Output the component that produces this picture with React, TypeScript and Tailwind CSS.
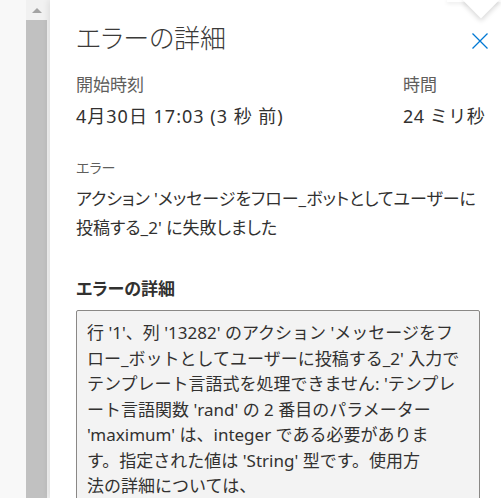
const font = "font-['Noto_Sans','Noto_Sans_CJK_JP',sans-serif]";
const palt = "[font-feature-settings:'palt']";

const detailLines = [
  "行 '1'、列 '13282' のアクション 'メッセージをフ",
  "ロー_ボットとしてユーザーに投稿する_2' 入力で",
  "テンプレート言語式を処理できません: 'テンプレ",
  "ート言語関数 'rand' の 2 番目のパラメーター",
  "'maximum' は、integer である必要がありま",
  "す。指定された値は 'String' 型です。使用方",
  "法の詳細については、",
];

const App = () => {
  return (
    <div className={`relative flex h-[498px] w-[501px] overflow-hidden bg-[#f8f8f8] ${font}`}>
      {/* left gutter */}
      <div className="w-[26px] shrink-0" />

      {/* scrollbar */}
      <div className="flex w-[21px] shrink-0 flex-col bg-[#f1f1f1]">
        <div className="flex h-[20px] items-center justify-center">
          <div className="h-0 w-0 border-x-[5px] border-b-[5px] border-x-transparent border-b-[#a3a3a3]" />
        </div>
        <div className="flex-1 bg-[#c1c1c1]" />
      </div>
      <div className="w-[3px] shrink-0 bg-[#f1f1f1]" />

      {/* details panel */}
      <div className="relative flex-1 bg-white pl-[26px] pr-[13px] pt-[19px] shadow-[-2px_0_6px_rgba(0,0,0,0.08)]">
        <div className="flex items-start justify-between">
          <h1 className={`text-[26px] font-light leading-[38px] text-[#3b3a39] ${palt}`}>エラーの詳細</h1>
          <button className="mt-[14px]">
            <svg width="16" height="16" viewBox="0 0 16 16" fill="none" stroke="#0078d4" strokeWidth="1.3">
              <path d="M0.5 0.5L15.5 15.5M15.5 0.5L0.5 15.5" />
            </svg>
          </button>
        </div>

        <div className="mt-[18px] flex">
          <div className="flex-1">
            <div className="text-[17px] leading-[20px] text-[#605e5c]">開始時刻</div>
            <div className="mt-[9px] text-[18px] leading-[24px] tracking-[1px] text-[#323130]">4月30日 17:03 (3 秒 前)</div>
          </div>
          <div className="w-[85px]">
            <div className="text-[17px] leading-[20px] text-[#605e5c]">時間</div>
            <div className="mt-[9px] whitespace-nowrap text-[18px] leading-[24px] tracking-[0.5px] text-[#323130]">24 ミリ秒</div>
          </div>
        </div>

        <div className={`mt-[30px] text-[14px] leading-[20px] text-[#605e5c] ${palt}`}>エラー</div>
        <p className={`mt-[6px] pr-[8px] text-[17px] leading-[29px] text-[#323130] ${palt}`}>
          アクション 'メッセージをフロー_ボットとしてユーザーに投稿する_2' に失敗しました
        </p>

        <h2 className={`mt-[35px] text-[17px] font-bold leading-[24px] text-[#323130] ${palt}`}>エラーの詳細</h2>
        <div className="mt-[9px] mr-[8px] rounded-[2px] border border-[#8a8886] bg-[#f3f3f3] px-[10px] pt-[9px] pb-4 text-[17px] leading-[25.5px] text-[#323130]">
          {detailLines.map((line, i) => (
            <div key={i} className="whitespace-nowrap">
              {line}
            </div>
          ))}
        </div>
      </div>

      {/* callout beak from the popup above */}
      <div className="absolute right-0 top-0 h-[2px] w-[54px] bg-white shadow-[0_1px_4px_rgba(0,0,0,0.15)]" />
      <div className="absolute right-[7px] top-[-13px] h-[26px] w-[26px] rotate-45 bg-white shadow-[2px_2px_5px_rgba(0,0,0,0.15)]" />
    </div>
  );
};

export default App;
